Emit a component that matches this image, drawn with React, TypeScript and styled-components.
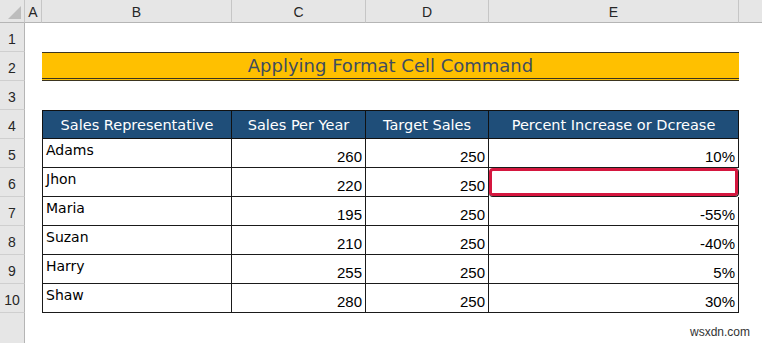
import React from 'react'
import styled, { createGlobalStyle } from 'styled-components'

const GlobalStyle = createGlobalStyle`
  html, body {
    margin: 0;
    padding: 0;
    background: #ffffff;
  }
`

const COLUMNS = ['A', 'B', 'C', 'D', 'E', '']

const ROWS = [
  { name: 'Adams', perYear: 260, target: 250, change: '10%' },
  { name: 'Jhon', perYear: 220, target: 250, change: '' },
  { name: 'Maria', perYear: 195, target: 250, change: '-55%' },
  { name: 'Suzan', perYear: 210, target: 250, change: '-40%' },
  { name: 'Harry', perYear: 255, target: 250, change: '5%' },
  { name: 'Shaw', perYear: 280, target: 250, change: '30%' },
]

const HEADINGS = ['Sales Representative', 'Sales Per Year', 'Target Sales', 'Percent Increase or Dcrease']

const App: React.FC = () => {
  return (
    <>
      <GlobalStyle />
      <Sheet>
        <Corner>
          <CornerTriangle />
        </Corner>
        {COLUMNS.map((col, i) => (
          <ColHeader key={i} last={i === COLUMNS.length - 1}>{col}</ColHeader>
        ))}
        {Array.from({ length: 10 }, (_, i) => (
          <RowHeader key={i} row={i + 2}>{i + 1}</RowHeader>
        ))}
        <RowHeaderFill />
        <Canvas />

        <Banner>Applying Format Cell Command</Banner>

        {HEADINGS.map((h, i) => (
          <HeadCell key={h} col={i + 3} first={i === 0}>{h}</HeadCell>
        ))}

        {ROWS.map((r, i) => {
          const row = i + 6
          const marked = r.change === ''
          return (
            <React.Fragment key={r.name}>
              <NameCell row={row}>{r.name}</NameCell>
              <NumCell row={row} col={4}>{r.perYear}</NumCell>
              <NumCell row={row} col={5}>{r.target}</NumCell>
              <NumCell row={row} col={6} marked={marked}>{r.change}</NumCell>
            </React.Fragment>
          )
        })}

        <Watermark>wsxdn.com</Watermark>
      </Sheet>
    </>
  )
}

const Sheet = styled.div`
  position: relative;
  display: grid;
  grid-template-columns: 25px 17px 190px 134px 123px 250px 1fr;
  grid-template-rows: 23px repeat(10, 29px) 1fr;
  width: 762px;
  height: 343px;
  overflow: hidden;
  background: #ffffff;
  font-family: 'Liberation Sans', Arial, sans-serif;
`

const Corner = styled.div`
  grid-column: 1;
  grid-row: 1;
  position: relative;
  background: #e6e6e6;
  border-right: 1px solid #c6c6c6;
  border-bottom: 1px solid #b5b5b5;
`

const CornerTriangle = styled.div`
  position: absolute;
  right: 3px;
  bottom: 3px;
  width: 0;
  height: 0;
  border-left: 13px solid transparent;
  border-bottom: 13px solid #bdbdbd;
`

const ColHeader = styled.div<{ last?: boolean }>`
  grid-row: 1;
  display: flex;
  align-items: center;
  justify-content: center;
  background: #e6e6e6;
  border-right: ${p => (p.last ? 'none' : '1px solid #c6c6c6')};
  border-bottom: 1px solid #b5b5b5;
  color: #262626;
  font-size: 14px;
  padding-top: 1px;
`

const RowHeader = styled.div<{ row: number }>`
  grid-column: 1;
  grid-row: ${p => p.row};
  display: flex;
  align-items: center;
  justify-content: center;
  background: #e6e6e6;
  border-right: 1px solid #b5b5b5;
  border-bottom: 1px solid #cfcfcf;
  color: #262626;
  font-size: 14px;
  padding-top: 3px;
`

const RowHeaderFill = styled.div`
  grid-column: 1;
  grid-row: 12;
  background: #e6e6e6;
  border-right: 1px solid #b5b5b5;
`

const Canvas = styled.div`
  grid-column: 2 / 8;
  grid-row: 2 / 13;
  background: #ffffff;
`

const Banner = styled.div`
  grid-column: 3 / 7;
  grid-row: 3;
  display: flex;
  align-items: center;
  justify-content: center;
  background: #ffc000;
  border-top: 1px solid #3b3520;
  border-bottom: 3px double #3b3520;
  color: #3f4d5f;
  font-family: 'Comic Sans MS', 'DejaVu Sans', sans-serif;
  font-size: 18px;
  padding-bottom: 1px;
`

const HeadCell = styled.div<{ col: number; first?: boolean }>`
  grid-column: ${p => p.col};
  grid-row: 5;
  display: flex;
  align-items: center;
  justify-content: center;
  background: #1f4e79;
  color: #ffffff;
  border-top: 1px solid #111;
  border-bottom: 1px solid #111;
  border-right: 1px solid #111;
  border-left: ${p => (p.first ? '1px solid #111' : 'none')};
  font-family: 'Comic Sans MS', 'DejaVu Sans', sans-serif;
  font-size: 14.5px;
  white-space: nowrap;
`

const BodyCell = styled.div<{ row: number }>`
  grid-row: ${p => p.row};
  display: flex;
  align-items: center;
  border-right: 1px solid #1a1a1a;
  border-bottom: 1px solid #1a1a1a;
  color: #000;
  white-space: nowrap;
`

const NameCell = styled(BodyCell)`
  grid-column: 3;
  border-left: 1px solid #1a1a1a;
  padding: 0 0 6px 3px;
  font-family: 'Comic Sans MS', 'DejaVu Sans', sans-serif;
  font-size: 14px;
`

const NumCell = styled(BodyCell)<{ col: number; marked?: boolean }>`
  grid-column: ${p => p.col};
  justify-content: flex-end;
  padding: 6px 3px 0 0;
  font-size: 15px;
  box-shadow: ${p => (p.marked ? 'inset 0 0 0 3px #d5173f' : 'none')};
  border-radius: ${p => (p.marked ? '4px' : '0')};
`

const Watermark = styled.div`
  position: absolute;
  right: 12px;
  bottom: 4px;
  color: #333333;
  font-size: 12px;
`

export default App
